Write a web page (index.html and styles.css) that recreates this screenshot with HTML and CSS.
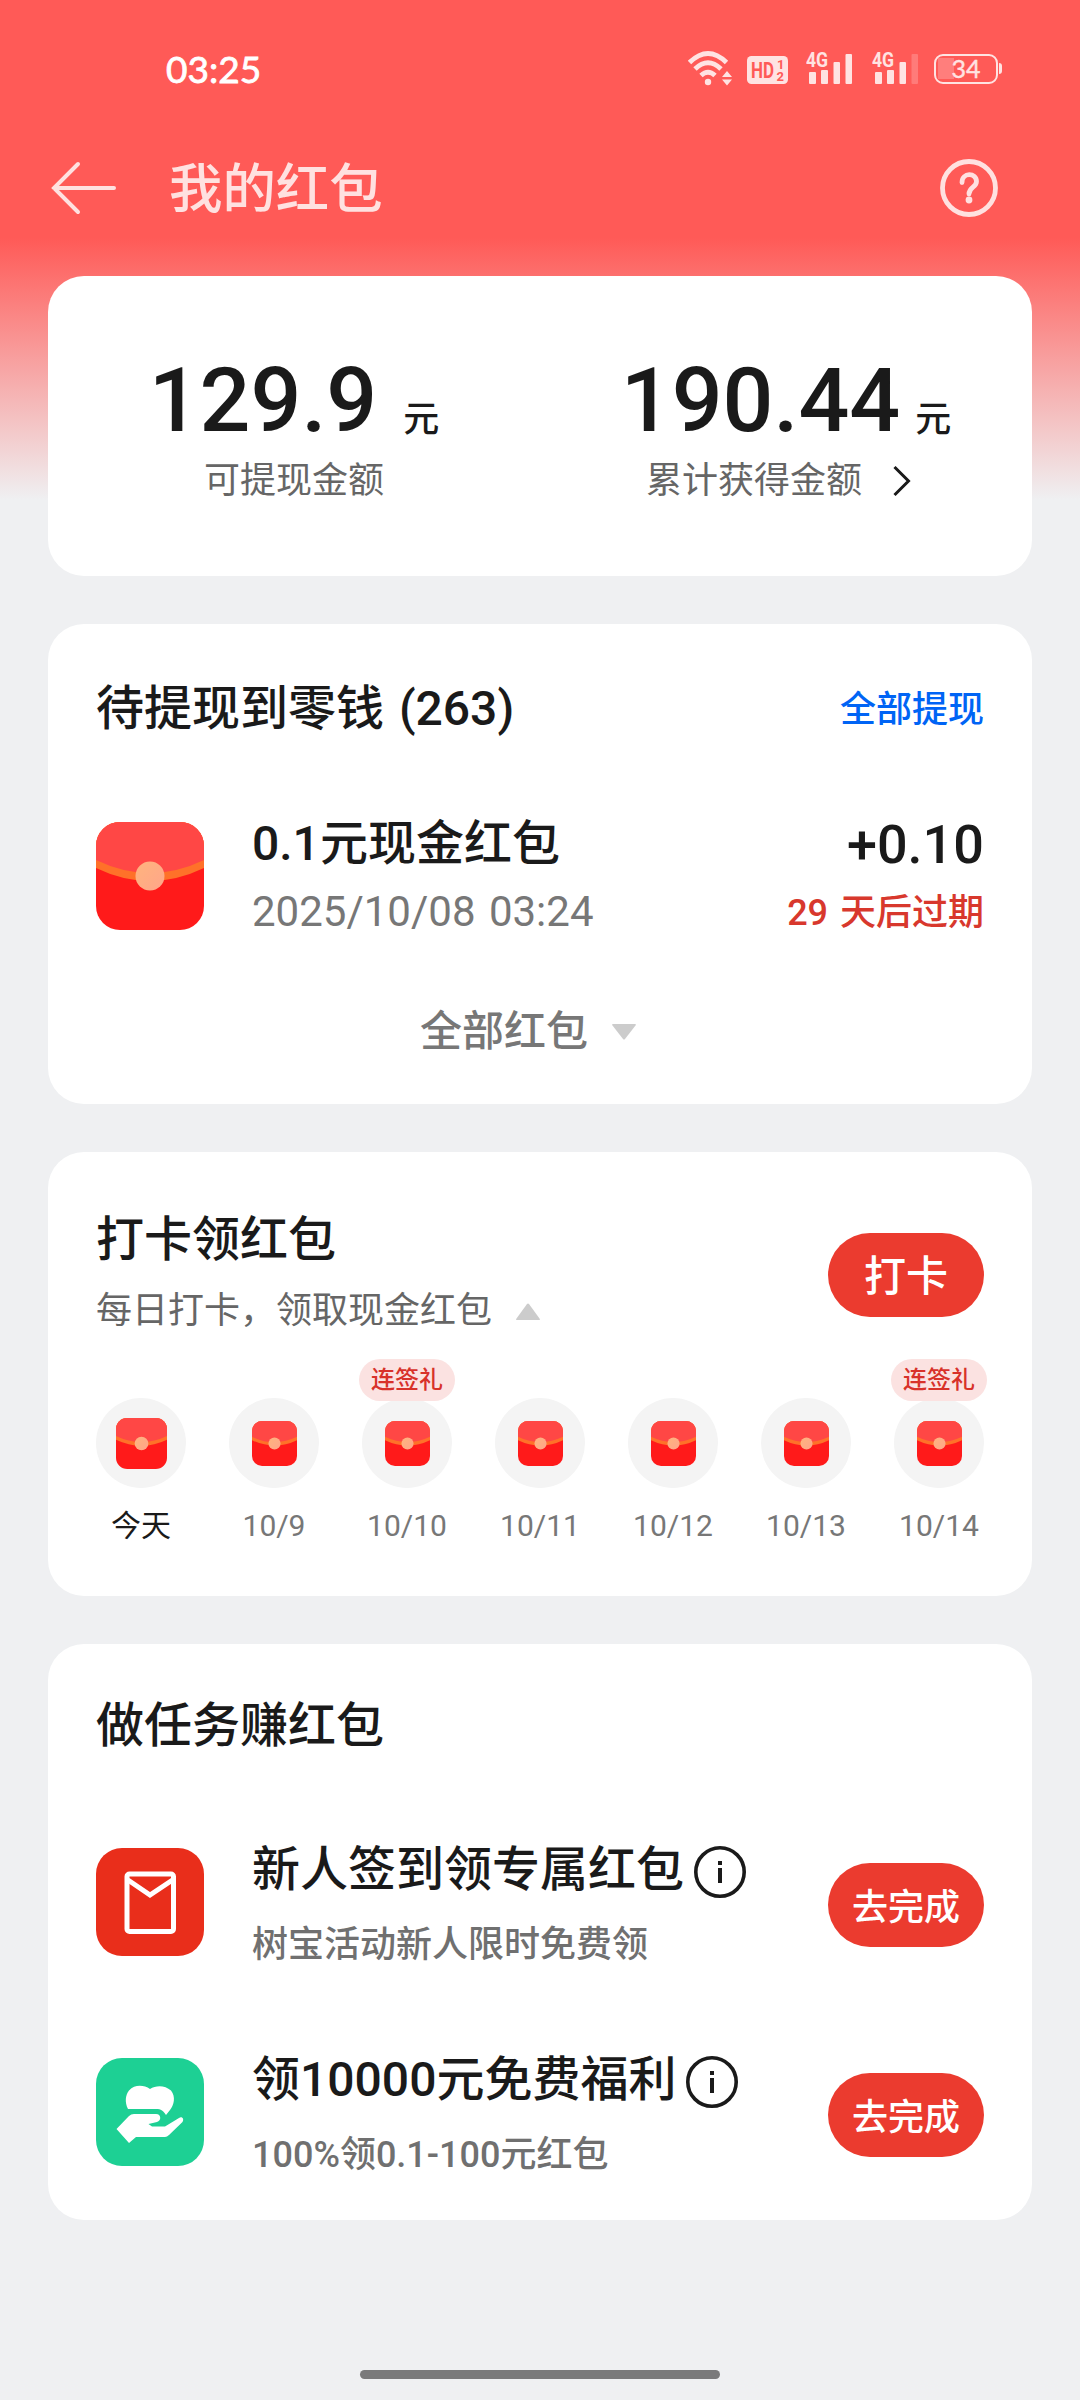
FILE: index.html
```html
<!DOCTYPE html>
<html lang="zh-CN">
<head>
<meta charset="utf-8">
<title>我的红包</title>
<link rel="stylesheet" href="styles.css">
</head>
<body>
<svg class="defs" width="0" height="0">
  <defs>
    <linearGradient id="seal" x1="0" y1="0" x2="1" y2="1">
      <stop offset="0" stop-color="#ffb47d"/><stop offset="1" stop-color="#ffa58a"/>
    </linearGradient>
    <clipPath id="packet-clip"><rect width="108" height="108" rx="24"/></clipPath>
    <symbol id="packet" viewBox="0 0 108 108">
      <g clip-path="url(#packet-clip)">
        <rect width="108" height="108" fill="#ff1a1a"/>
        <path d="M0 0H108V46Q54 72 0 46Z" fill="#ff7129"/>
        <path d="M0 0H108V38Q54 64 0 38Z" fill="#ff4745"/>
        <circle cx="54" cy="54" r="14.5" fill="url(#seal)"/>
      </g>
    </symbol>
  </defs>
</svg>
<div class="page">
  <div class="status">
    <span class="clock">03:25</span>
    <div class="status-icons">
      <svg class="wifi" width="44" height="36" viewBox="0 0 44 36" fill="none" stroke="#ffe3e2" stroke-width="4.9">
        <path d="M1.5 12.5Q20 -5.500 38.500 12.500M7 19Q20 6.500 33 19M13 25.500Q20 19 27 25.500"/>
        <circle cx="20" cy="32" r="3.200" fill="#ffe3e2" stroke="none"/>
        <path d="M34 27l5-6 5 6zM34 29.500l5 6 5-6z" fill="#ffe3e2" stroke="none"/>
      </svg>
      <svg class="hd" width="41" height="28" viewBox="0 0 41 28"><rect width="41" height="28" rx="4.500" fill="#ffe3e2"/><text class="hd-label" x="4" y="22" textLength="23" lengthAdjust="spacingAndGlyphs">HD</text><text class="hd-sim" x="30" y="13">1</text><text class="hd-sim" x="29.500" y="25">2</text></svg>
      <span class="cell">
        <span class="gen">4G</span>
        <svg width="47" height="34" viewBox="0 0 47 34" fill="#ffe3e2"><rect x="3" y="22" width="7" height="12" rx="1"/><rect x="15" y="20" width="7" height="14" rx="1"/><rect x="27.500" y="12" width="6.500" height="22" rx="1"/><rect x="39.500" y="4" width="6.500" height="30" rx="1"/></svg>
      </span>
      <span class="cell second">
        <span class="gen">4G</span>
        <svg width="47" height="34" viewBox="0 0 47 34" fill="#ffe3e2"><rect x="3" y="22" width="7" height="12" rx="1"/><rect x="15" y="20" width="7" height="14" rx="1"/><rect x="27.500" y="12" width="6.500" height="22" rx="1"/><rect x="39.500" y="4" width="6.500" height="30" rx="1" fill="#ff7b79"/></svg>
      </span>
      <span class="battery"><span>34</span></span>
    </div>
  </div>
  <header class="nav">
    <svg class="back" width="68" height="56" viewBox="0 0 68 56" fill="none" stroke="#ffe1e0" stroke-width="4" stroke-linecap="round"><path d="M64 28H4M28 4L4 28L28 52"/></svg>
    <h1>我的红包</h1>
    <svg class="help" width="58" height="58" viewBox="0 0 58 58" fill="none" stroke="#ffe1e0" stroke-width="4.800"><circle cx="29" cy="29" r="26.500"/><path d="M22 23.500C22 13 36.500 13.500 36.500 22.500C36.500 28.500 29 28 29 35" stroke-linecap="round"/><circle cx="29" cy="41" r="3.400" fill="#ffe1e0" stroke="none"/></svg>
  </header>

  <main>
    <section class="card summary">
      <div class="total">
        <div class="amount wide"><strong>129.9</strong><span>元</span></div>
        <div class="caption">可提现金额</div>
      </div>
      <div class="total">
        <div class="amount"><strong>190.44</strong><span>元</span></div>
        <div class="caption">累计获得金额<svg width="48" height="48" viewBox="0 0 48 48" fill="none" stroke="#1a1a1a" stroke-width="3"><path d="M16.500 11L30.500 25L16.500 39"/></svg></div>
      </div>
    </section>

    <section class="card pending">
      <div class="row">
        <h2>待提现到零钱 (263)</h2>
        <a class="link">全部提现</a>
      </div>
      <div class="row item">
        <svg class="icon" width="108" height="108"><use href="#packet"/></svg>
        <div class="text">
          <div class="name">0.1元现金红包</div>
          <div class="date">2025/10/08 03:24</div>
        </div>
        <div class="value">
          <div class="plus">+0.10</div>
          <div class="expire">29 天后过期</div>
        </div>
      </div>
      <div class="more">全部红包<svg width="24" height="16" viewBox="0 0 24 16"><path d="M1 0H23Q24.500 0 23.500 1.500L13 15Q12 16 11 15L.5 1.500Q-.5 0 1 0Z" fill="#ccc"/></svg></div>
    </section>

    <section class="card checkin">
      <div class="row">
        <div>
          <h2>打卡领红包</h2>
          <div class="hint">每日打卡，领取现金红包<svg width="24" height="17" viewBox="0 0 24 17"><path d="M1 17H23Q24.500 17 23.500 15.500L13 1Q12 0 11 1L.5 15.500Q-.5 17 1 17Z" fill="#ccc"/></svg></div>
        </div>
        <a class="btn large">打卡</a>
      </div>
      <div class="days">
        <div class="day today"><span class="disc"><svg width="51" height="51"><use href="#packet"/></svg></span><span>今天</span></div>
        <div class="day"><span class="disc"><svg width="45" height="45"><use href="#packet"/></svg></span><span>10/9</span></div>
        <div class="day"><span class="tag">连签礼</span><span class="disc"><svg width="45" height="45"><use href="#packet"/></svg></span><span>10/10</span></div>
        <div class="day"><span class="disc"><svg width="45" height="45"><use href="#packet"/></svg></span><span>10/11</span></div>
        <div class="day"><span class="disc"><svg width="45" height="45"><use href="#packet"/></svg></span><span>10/12</span></div>
        <div class="day"><span class="disc"><svg width="45" height="45"><use href="#packet"/></svg></span><span>10/13</span></div>
        <div class="day"><span class="tag">连签礼</span><span class="disc"><svg width="45" height="45"><use href="#packet"/></svg></span><span>10/14</span></div>
      </div>
    </section>

    <section class="card tasks">
      <h2>做任务赚红包</h2>
      <div class="row task">
        <svg class="icon" width="108" height="108" viewBox="0 0 108 108"><rect width="108" height="108" rx="26" fill="#e92e1b"/><g fill="none" stroke="#fff" stroke-width="5"><rect x="31" y="26" width="46.500" height="57.500" rx="2.500"/><path d="M32 32L54 47L76.500 32"/></g></svg>
        <div class="text">
          <div class="name">新人签到领专属红包<svg width="52" height="52" viewBox="0 0 52 52"><circle cx="26" cy="26" r="24.200" fill="none" stroke="#1a1a1a" stroke-width="3.600"/><path d="M24 15h4v4h-4zM24 22h4v15h-4z" fill="#1a1a1a"/></svg></div>
          <div class="desc">树宝活动新人限时免费领</div>
        </div>
        <a class="btn">去完成</a>
      </div>
      <div class="row task">
        <svg class="icon" width="108" height="108" viewBox="0 0 108 108"><rect width="108" height="108" rx="26" fill="#1dd094"/><g fill="#fff"><path d="M32 51C28.500 44 29.500 37 33 32.500C39 26 48 27 54 31C60 27 69 27 75 32.500C80 39 78 47 74 52L70 57C66 51 64 51 58 51Z"/><path d="M20.500 71L33 58Q35 56 38 56H60C65.500 56 65.500 63 61 64L52.500 66L56 68.500H69L83 60C86 58 88.500 61 86.500 64L73 77Q71 79 69 79H40L33 85Z"/></g></svg>
        <div class="text">
          <div class="name">领10000元免费福利<svg width="52" height="52" viewBox="0 0 52 52"><circle cx="26" cy="26" r="24.200" fill="none" stroke="#1a1a1a" stroke-width="3.600"/><path d="M24 15h4v4h-4zM24 22h4v15h-4z" fill="#1a1a1a"/></svg></div>
          <div class="desc">100%领0.1-100元红包</div>
        </div>
        <a class="btn">去完成</a>
      </div>
    </section>
  </main>
  <div class="home-bar"></div>
</div>
</body>
</html>
```
FILE: styles.css
```css
* { box-sizing: border-box; }
body { margin: 0; }
h1, h2 { margin: 0; font-weight: 500; }
svg { display: block; flex: none; }
.defs { position: absolute; }

.page {
  display: flex;
  flex-direction: column;
  width: 1080px;
  height: 2400px;
  overflow: hidden;
  background: linear-gradient(#ff5a57 0, #ff5a57 238px, #eff0f2 500px);
  color: #1a1a1a;
  font-family: Roboto, "Noto Sans CJK SC", sans-serif;
  white-space: nowrap;
}

/* status bar */
.status {
  display: flex;
  justify-content: space-between;
  height: 136px;
  padding: 50px 79px 0 166px;
  color: #ffe3e2;
}
.clock {
  color: #fff;
  font: 400 37px/38px Lato, sans-serif;
  -webkit-text-stroke: .8px #fff;
}
.status-icons { display: flex; align-items: flex-start; }
.hd { margin: 6px 18px 0 15px; }
.hd text { fill: #ff5a57; font-family: Roboto, sans-serif; font-weight: 700; }
.hd-label { font-size: 22px; }
.hd-sim { font-size: 13px; }
.cell { display: flex; position: relative; width: 47px; margin-right: 19px; }
.cell.second { margin-right: 15px; }
.gen { position: absolute; left: 0; top: 2px; font: 700 21px/16px Roboto, sans-serif; transform: scaleX(.84); transform-origin: 0 0; }
.battery {
  position: relative;
  display: flex;
  align-items: center;
  justify-content: center;
  width: 64px;
  height: 30px;
  margin: 4px 3px 0 0;
  border: 2.500px solid #ffe3e2;
  border-radius: 9px;
  background: linear-gradient(90deg, #ff7e7c 0 16px, transparent 16px) no-repeat 2px 2px / 20px 21px;
  font: 400 25px/25px Lato, sans-serif;
}
.battery span { margin-bottom: 1px; -webkit-text-stroke: .4px #ffe3e2; }
.battery::after {
  content: "";
  position: absolute;
  right: -6px;
  top: 7px;
  width: 3px;
  height: 11px;
  border-radius: 0 3px 3px 0;
  background: #ffe3e2;
}

/* title bar */
.nav {
  display: flex;
  align-items: center;
  height: 104px;
  padding: 0 82px 0 50px;
  color: #ffe1e0;
}
.nav h1 { flex: 1; margin: 3px 0 0 51px; font-size: 53.4px; line-height: 80px; }

/* cards */
main { display: flex; flex-direction: column; gap: 48px; padding: 36px 48px 0; }
.card { border-radius: 36px; background: #fff; }
.row { display: flex; justify-content: space-between; align-items: center; }
h2, .name { font-size: 48px; line-height: 60px; font-weight: 500; }
h2 { word-spacing: 3px; }

.summary { display: grid; grid-template-columns: 1fr 1fr; height: 300px; padding-top: 81px; }
.total { display: flex; flex-direction: column; align-items: center; }
.amount { display: flex; align-items: baseline; gap: 15px; height: 100px; line-height: 88px; }
.amount.wide { gap: 26px; }
.amount strong { font-size: 89.6px; font-weight: 500; }
.amount span { position: relative; top: 1px; font-size: 36px; font-weight: 500; line-height: 40px; }
.caption { display: flex; align-items: center; gap: 16px; height: 48px; color: #666; font-size: 36px; line-height: 48px; }
.caption svg { margin-bottom: 3px; }

.pending { height: 480px; padding: 55px 48px 0; }
.link { margin-bottom: 7px; color: #0064f5; font-size: 36px; font-weight: 500; }
.item { height: 120px; margin-top: 77px; }
.item .text, .task .text { flex: 1; margin-left: 48px; }
.item .text { margin-top: -2px; }
.date { margin-top: 14px; color: #777; font-size: 42px; line-height: 48px; word-spacing: 3px; }
.value { margin-top: -3px; text-align: right; }
.plus { font-size: 54px; font-weight: 500; line-height: 64px; }
.expire { margin-top: 13px; color: #d8382d; font-size: 36px; font-weight: 500; line-height: 46px; word-spacing: 3px; }
.more { display: flex; align-items: center; justify-content: center; gap: 24px; margin-top: 68px; padding-right: 24px; color: #777; font-size: 42px; font-weight: 500; line-height: 56px; }

.checkin { height: 444px; padding: 58px 48px 0; }
.hint { display: flex; align-items: center; gap: 24px; margin-top: 17px; color: #666; font-size: 36px; line-height: 48px; }
.btn {
  display: flex;
  align-items: center;
  justify-content: center;
  width: 156px;
  height: 84px;
  margin-top: 6px;
  padding-bottom: 3px;
  border-radius: 42px;
  background: #eb3b2f;
  color: #fff;
  font-size: 36px;
  font-weight: 500;
}
.btn.large { margin-top: 4px; padding-bottom: 5px; font-size: 42px; }
.days { display: flex; justify-content: space-between; margin-top: 63px; }
.day { position: relative; display: flex; flex-direction: column; align-items: center; gap: 18px; width: 90px; color: #777; font-size: 30px; line-height: 40px; }
.day.today { color: #1a1a1a; }
.disc { display: flex; align-items: center; justify-content: center; width: 90px; height: 90px; border-radius: 50%; background: #f4f4f4; }
.tag {
  position: absolute;
  top: -39px;
  left: -3px;
  width: 96px;
  height: 42px;
  border-radius: 21px;
  background: #fbe2e1;
  color: #d8322a;
  font-size: 24px;
  font-weight: 500;
  line-height: 43px;
  text-align: center;
}

.tasks { height: 576px; padding: 52px 48px 0; }
.task { height: 120px; margin-top: 86px; }
.task + .task { margin-top: 90px; }
.task .text { padding-top: 5px; }
.task .name { display: flex; align-items: center; gap: 10px; }
.task .name svg { margin-top: 4px; }
.task .desc { margin-top: 21px; color: #707070; font-size: 36px; font-weight: 500; line-height: 48px; }

.home-bar { width: 360px; height: 9px; margin: auto auto 21px; border-radius: 5px; background: #7a7a7b; }
```
